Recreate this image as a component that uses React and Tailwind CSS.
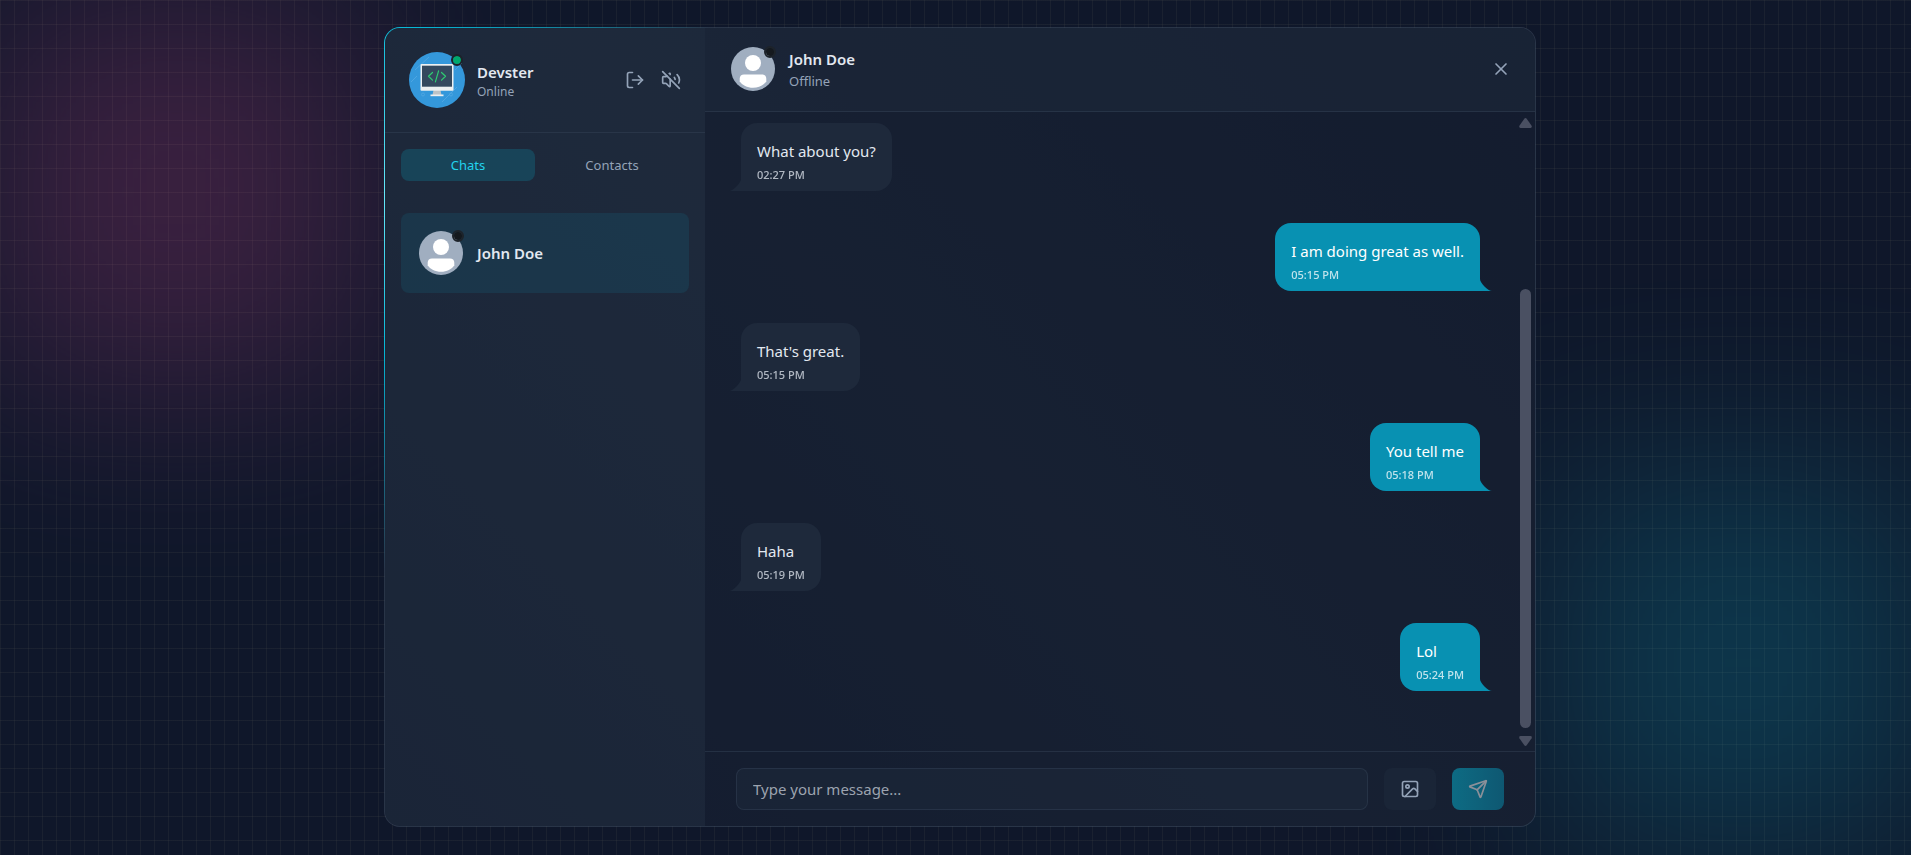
import { Image as ImageIcon, LogOut, Send, VolumeOff, X } from "lucide-react";

const messages = [
  { id: 1, text: "What about you?", time: "02:27 PM", mine: false },
  { id: 2, text: "I am doing great as well.", time: "05:15 PM", mine: true },
  { id: 3, text: "That's great.", time: "05:15 PM", mine: false },
  { id: 4, text: "You tell me", time: "05:18 PM", mine: true },
  { id: 5, text: "Haha", time: "05:19 PM", mine: false },
  { id: 6, text: "Lol", time: "05:24 PM", mine: true },
];

function PersonAvatar() {
  return (
    <div className="relative size-12 shrink-0">
      <svg viewBox="0 0 48 48" className="size-12" aria-hidden="true">
        <circle cx="24" cy="24" r="22" fill="#a0aec0" />
        <circle cx="24" cy="18" r="8" fill="#fff" />
        <path d="M15 29.5h18c2.600 0 4.300 1.600 4.300 4.200v2.600C34.800 40.300 29.800 42.800 24 42.800S13.200 40.300 10.700 36.300v-2.600c0-2.600 1.700-4.200 4.300-4.200z" fill="#fff" />
      </svg>
      <span className="absolute top-[7%] right-[7%] size-[15%] rounded-full bg-[#15191e] outline-2 outline-[#1d232a]" />
    </div>
  );
}

function DevsterAvatar() {
  return (
    <div className="relative size-14 shrink-0">
      <svg viewBox="0 0 56 56" className="size-14" aria-hidden="true">
        <circle cx="28" cy="28" r="28" fill="#3498db" />
        <g stroke="#4ea6e2" strokeWidth="1">
          <path d="M6 18L20 5M2 30l6-6M33 50l15-15M46 18l7-7" />
          <circle cx="14" cy="42.500" r="1.500" fill="none" />
          <circle cx="42" cy="42.500" r="1.500" fill="none" />
        </g>
        <path d="M24.500 38h7l1.200 6h-9.400z" fill="#bdc3c7" />
        <rect x="21.500" y="42.500" width="13" height="1.700" fill="#ecf0f1" />
        <rect x="11.500" y="12" width="33" height="26.700" rx="1" fill="#ecf0f1" />
        <rect x="13" y="13.700" width="30" height="21" fill="#34495e" />
        <path d="M23.500 20.500l-4 3.800 4 3.800M32.500 20.500l4 3.800-4 3.800M29.600 18.800l-3.200 11" fill="none" stroke="#2ecc71" strokeWidth="1.200" strokeLinecap="round" strokeLinejoin="round" />
      </svg>
      <span className="absolute top-[7%] right-[7%] size-[15%] rounded-full bg-[#00a96e] outline-2 outline-[#1d232a]" />
    </div>
  );
}

function Sidebar() {
  return (
    <aside className="flex w-80 shrink-0 flex-col bg-[#1e293b]/50">
      <header className="flex items-center justify-between border-b border-[#334155]/50 p-6">
        <div className="flex items-center gap-3">
          <DevsterAvatar />
          <div>
            <h2 className="text-[15px] leading-6 font-semibold text-[#e2e8f0]">Devster</h2>
            <p className="text-[12px] leading-4 text-[#94a3b8]">Online</p>
          </div>
        </div>
        <div className="flex items-center gap-4 text-[#94a3b8]">
          <button type="button" aria-label="Log out"><LogOut className="size-5" /></button>
          <button type="button" aria-label="Turn sound on"><VolumeOff className="size-5" /></button>
        </div>
      </header>

      <div className="m-2 grid grid-cols-2 p-2 text-[13px] leading-5" role="tablist">
        <button type="button" role="tab" aria-selected="true" className="mr-2.5 h-8 rounded-lg bg-[#06b6d4]/20 text-[#22d3ee]">
          Chats
        </button>
        <button type="button" role="tab" aria-selected="false" className="mr-2.5 h-8 rounded-lg text-[#94a3b8]">
          Contacts
        </button>
      </div>

      <div className="flex-1 p-4">
        <button type="button" className="flex w-full items-center gap-3 rounded-lg bg-[#06b6d4]/10 p-4 text-left">
          <PersonAvatar />
          <span className="text-[15px] leading-6 font-semibold text-[#e2e8f0]">John Doe</span>
        </button>
      </div>
    </aside>
  );
}

function Message({ text, time, mine }) {
  return (
    <li className={mine ? "flex justify-end px-3" : "flex justify-start px-3"}>
      <div
        className={
          mine
            ? "relative rounded-2xl rounded-br-none bg-[#0891b2] px-4 py-2 text-white"
            : "relative rounded-2xl rounded-bl-none bg-[#1e293b] px-4 py-2 text-[#e2e8f0]"
        }
      >
        <svg
          viewBox="0 0 3 3"
          aria-hidden="true"
          className={mine ? "absolute bottom-0 left-full size-3 fill-[#0891b2]" : "absolute right-full bottom-0 size-3 fill-[#1e293b]"}
        >
          <path d={mine ? "M0 3H3C2 3 0 1 0 0Z" : "M0 3H3V0C3 1 1 3 0 3Z"} />
        </svg>
        <p className="mt-2 text-[15px] leading-6">{text}</p>
        <p className="mt-1 text-[11px] leading-4 font-medium opacity-75">{time}</p>
      </div>
    </li>
  );
}

function Scrollbar() {
  return (
    <div className="flex w-[19px] shrink-0 flex-col items-center pt-1.5 pb-[5px]" aria-hidden="true">
      <svg viewBox="0 0 13 10" className="h-2.5 w-[13px] fill-[#4a5062]">
        <path d="M5.300 .8Q6.500-.6 7.700 .8L12.600 7.800Q13.300 10 11.500 10H1.500Q-.3 10 .4 7.800Z" />
      </svg>
      <div className="basis-[161px]" />
      <div className="w-[11px] flex-1 rounded-full bg-[#4a5062]" />
      <div className="h-2" />
      <svg viewBox="0 0 13 10" className="h-2.5 w-[13px] fill-[#4a5062]">
        <path d="M5.300 9.200Q6.500 10.600 7.700 9.200L12.600 2.200Q13.300 0 11.500 0H1.500Q-.3 0 .4 2.200Z" />
      </svg>
    </div>
  );
}

function Conversation() {
  return (
    <main className="flex min-w-0 flex-1 flex-col bg-[#0f172a]/50">
      <header className="flex h-[84px] shrink-0 items-center justify-between border-b border-[#334155]/50 bg-[#1e293b]/50 px-6 pb-px">
        <div className="flex items-center gap-3">
          <PersonAvatar />
          <div>
            <h3 className="text-[15px] leading-6 font-semibold text-[#e2e8f0]">John Doe</h3>
            <p className="text-[13px] leading-5 text-[#94a3b8]">Offline</p>
          </div>
        </div>
        <button type="button" aria-label="Close chat" className="text-[#94a3b8]"><X className="size-5" /></button>
      </header>

      <div className="flex min-h-0 flex-1">
        <ul className="flex min-w-0 flex-1 flex-col justify-end gap-8 overflow-hidden px-6 pb-[60px]">
          {messages.map((m) => (
            <Message key={m.id} text={m.text} time={m.time} mine={m.mine} />
          ))}
        </ul>
        <Scrollbar />
      </div>

      <footer className="border-t border-[#334155]/50 p-4">
        <form className="mx-auto flex max-w-3xl gap-4" onSubmit={(e) => e.preventDefault()}>
          <input
            type="text"
            aria-label="Message"
            placeholder="Type your message..."
            className="h-[42px] min-w-0 flex-1 rounded-lg border border-[#334155]/50 bg-[#1e293b]/50 px-4 text-[15px] text-[#e2e8f0] placeholder:text-[#9ca3af]"
          />
          <button type="button" aria-label="Attach an image" className="flex w-13 items-center justify-center rounded-lg bg-[#1e293b]/50 text-[#94a3b8]">
            <ImageIcon className="size-5" />
          </button>
          <button
            type="submit"
            disabled
            aria-label="Send message"
            className="flex w-13 items-center justify-center rounded-lg bg-linear-to-r from-[#06b6d4] to-[#0891b2] text-white opacity-50"
          >
            <Send className="size-5" />
          </button>
        </form>
      </footer>
    </main>
  );
}

export default function App() {
  return (
    <div className="relative flex min-h-screen items-center justify-center overflow-hidden bg-[#0f172a] pt-4 pr-4 pb-[17px] pl-[25px] font-['Noto_Sans','Open_Sans',sans-serif]">
      <div className="absolute inset-0 bg-[linear-gradient(to_right,#4f4f4f2e_1px,transparent_1px),linear-gradient(to_bottom,#4f4f4f2e_1px,transparent_1px)] bg-size-[14px_24px]" />
      <div className="absolute top-0 -left-4 size-96 bg-[#ec4899] opacity-20 blur-[100px]" />
      <div className="absolute -right-6 bottom-0 size-96 bg-[#06b6d4] opacity-20 blur-[100px]" />

      <div className="relative flex h-[800px] w-full max-w-6xl overflow-hidden rounded-2xl border border-transparent [background:linear-gradient(45deg,#172033,#1e293b_50%,#172033)_padding-box,conic-gradient(from_328deg,#4755697a_80%,#06b6d4_86%,#67e8f9_90%,#06b6d4_94%,#4755697a)_border-box]">
        <Sidebar />
        <Conversation />
      </div>
    </div>
  );
}
